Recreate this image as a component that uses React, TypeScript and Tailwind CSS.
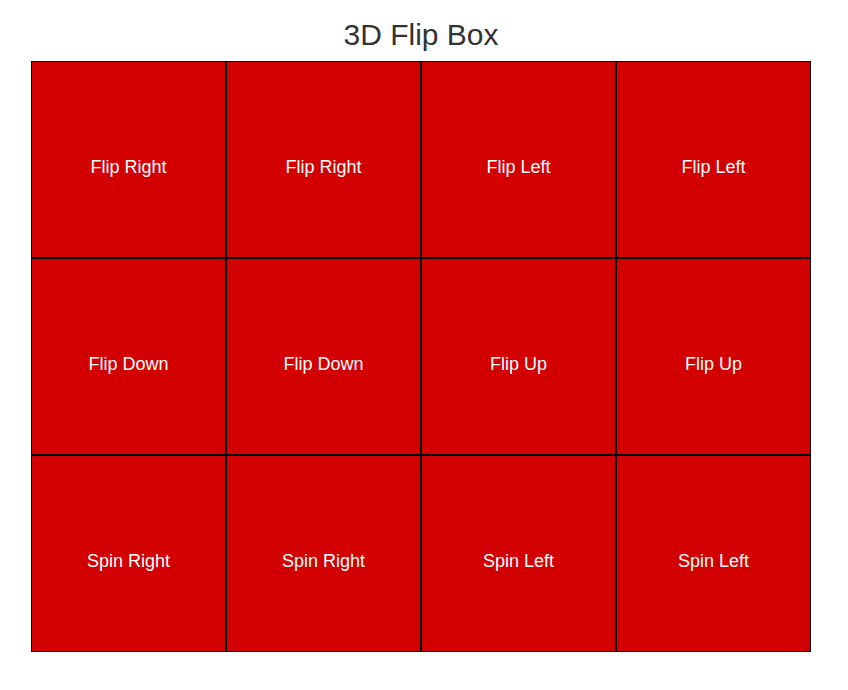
import React from 'react';

const labels = [
  'Flip Right', 'Flip Right', 'Flip Left', 'Flip Left',
  'Flip Down', 'Flip Down', 'Flip Up', 'Flip Up',
  'Spin Right', 'Spin Right', 'Spin Left', 'Spin Left',
];

export default function App() {
  return (
    <div className="min-h-[690px] bg-white pt-[17px] font-['Liberation_Sans',Arial,sans-serif]">
      <div className="ml-[31px] w-[780px]">
        <h1 className="mb-[8px] text-center text-[30px] leading-[36px] text-[#333333]">3D Flip Box</h1>
        <div className="grid grid-cols-4">
          {labels.map((label, i) => (
            <div
              key={i}
              className="flex h-[197px] items-center justify-center border border-black bg-[#d20000] pt-[16px] text-[18px] text-white"
            >
              {label}
            </div>
          ))}
        </div>
      </div>
    </div>
  );
}
